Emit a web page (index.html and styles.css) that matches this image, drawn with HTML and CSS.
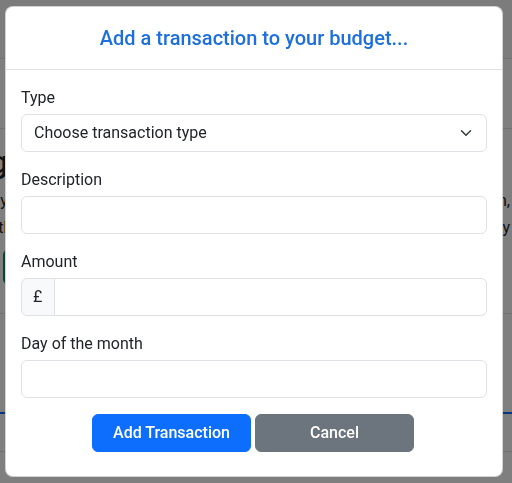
FILE: index.html
```html
<!DOCTYPE html>
<html lang="en">
<head>
<meta charset="utf-8">
<title>Add transaction</title>
<link rel="stylesheet" href="styles.css">
</head>
<body>
<div class="page">
  <div class="bg-nav"></div>
  <div class="bg-band"></div>
  <div class="bg-main">
    <h1 class="bg-title">Budgeting</h1>
    <p class="bg-text"><span>Plan your monthly budget by adding income and expenses, then plan it down,</span></p>
    <p class="bg-text"><span>so that you know exactly where you stand with your money every single day</span></p>
    <span class="bg-btn">Add</span>
  </div>
  <div class="bg-table"></div>
  <div class="bg-foot"></div>
</div>

<div class="modal">
  <div class="modal-dialog">
    <div class="modal-content">
      <div class="modal-header">
        <h5 class="modal-title">Add a transaction to your budget...</h5>
      </div>
      <form class="modal-body">
        <div class="field">
          <label class="form-label">Type</label>
          <div class="form-select">Choose transaction type
            <svg class="caret" viewBox="0 0 16 16" width="16" height="12"><path fill="none" stroke="#343a40" stroke-linecap="round" stroke-linejoin="round" stroke-width="2" d="m2 5 6 6 6-6"/></svg>
          </div>
        </div>
        <div class="field">
          <label class="form-label">Description</label>
          <div class="form-control"></div>
        </div>
        <div class="field">
          <label class="form-label">Amount</label>
          <div class="input-group">
            <span class="input-group-text">£</span>
            <div class="form-control grouped"></div>
          </div>
        </div>
        <div class="field">
          <label class="form-label">Day of the month</label>
          <div class="form-control"></div>
        </div>
        <div class="actions">
          <button type="button" class="btn btn-primary">Add Transaction</button>
          <button type="button" class="btn btn-secondary">Cancel</button>
        </div>
      </form>
    </div>
  </div>
</div>
</body>
</html>
```

FILE: styles.css
```css
* { box-sizing: border-box; }
html, body { margin: 0; padding: 0; }
body {
  font-family: Roboto, "Noto Sans", "Liberation Sans", sans-serif;
  font-size: 16px;
  line-height: 1.5;
  color: #212529;
  background: #fff;
  width: 512px;
  height: 483px;
  overflow: hidden;
}

/* background page (dimmed) */
.page { width: 512px; overflow: hidden; }
.bg-nav { height: 59px; background: #f8f9fa; border-bottom: 1px solid #dee2e6; }
.bg-band { height: 70px; border-bottom: 1px solid #dee2e6; }
.bg-main { height: 185px; border-bottom: 1px solid #dee2e6; padding-top: 14px; overflow: hidden; }
.bg-title { margin: 0 0 8px -138px; font-size: 32px; font-weight: 500; line-height: 1.2; white-space: nowrap; }
.bg-text {
  display: flex;
  justify-content: flex-end;
  margin: 0 0 3px;
  padding-right: 2px;
  overflow: hidden;
  white-space: nowrap;
  font-size: 16px;
  line-height: 24px;
}
.bg-text span { flex: none; }
.bg-btn { display: inline-block; margin: 6px 0 0 3px; background: #198754; color: #fff; border-radius: 6px; height: 36px; width: 80px; padding: 6px 12px; }
.bg-table { height: 100px; border-bottom: 2px solid #0d6efd; }
.bg-foot { height: 38px; border-bottom: 1px solid #dee2e6; }

/* modal */
.modal {
  position: fixed;
  inset: 0;
  background: rgba(0, 0, 0, 0.5);
}
.modal-dialog {
  width: 498px;
  margin: 6px 0 0 5px;
}
.modal-content {
  background: #fff;
  border: 1px solid rgba(0, 0, 0, 0.175);
  border-radius: 8px;
}
.modal-header {
  padding: 16px;
  border-bottom: 1px solid #dee2e6;
  text-align: center;
}
.modal-title {
  margin: 0;
  font-size: 20px;
  font-weight: 500;
  line-height: 30px;
  color: #1c6fdc;
}
.modal-body {
  padding: 16px 15px 24px;
  margin: 0;
}
.field { margin-bottom: 16px; }
.form-label {
  display: block;
  margin-bottom: 4px;
  line-height: 24px;
}
.form-select, .form-control, .input-group-text {
  height: 38px;
  border: 1px solid #dee2e6;
  border-radius: 6px;
  background: #fff;
  padding: 6px 12px;
  line-height: 24px;
}
.form-select {
  display: flex;
  align-items: center;
  justify-content: space-between;
  padding-right: 12px;
}
.caret { display: block; }
.input-group { display: flex; }
.input-group-text {
  background: #f8f9fa;
  border-radius: 6px 0 0 6px;
  width: 34px;
  padding: 6px 0 6px 11px;
}
.form-control.grouped {
  flex: 1;
  border-left: 0;
  border-radius: 0 6px 6px 0;
}
.actions {
  display: flex;
  justify-content: center;
  gap: 4px;
  padding-right: 2px;
}
.btn {
  width: 159px;
  height: 38px;
  border: 1px solid transparent;
  border-radius: 6px;
  font-family: inherit;
  font-size: 16px;
  font-weight: 500;
  color: #fff;
  line-height: 24px;
  padding: 6px 12px;
}
.btn-primary { background: #0d6efd; border-color: #0d6efd; }
.btn-secondary { background: #6c757d; border-color: #6c757d; }
```
